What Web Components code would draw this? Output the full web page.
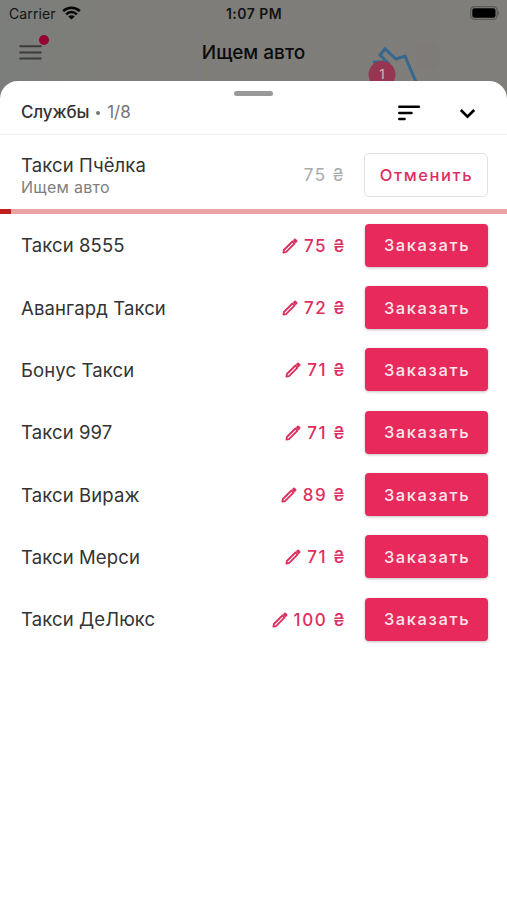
<!DOCTYPE html>
<html lang="ru">
<head>
<meta charset="UTF-8">
<meta name="viewport" content="width=device-width, initial-scale=1.0">
<title>Ищем авто</title>
<style>
    body {
        margin: 0;
        font-family: Inter, "Liberation Sans", sans-serif;
    }
</style>
</head>
<body>
<taxi-app></taxi-app>

<script>
/* status-bar: carrier, time and battery */
const statusBarTemplate = document.createElement("template");

statusBarTemplate.innerHTML = `
    <style>
    :host {
        display: grid;
        grid-template-columns: 1fr auto 1fr;
        align-items: center;
        height: 27px;
        padding: 0 8px 0 9px;
        font-size: 14px;
        color: #131312;
    }

    .carrier {
        display: flex;
        align-items: center;
        gap: 6px;
        letter-spacing: 0.1px;
    }

    .time {
        font-size: 14px;
        font-weight: 600;
        letter-spacing: 0.45px;
    }

    .battery {
        justify-self: end;
    }

    svg {
        display: block;
        margin-top: -1px;
    }
    </style>

    <div class="carrier">
        <span>Carrier</span>
        <svg width="19" height="14" viewBox="0 0 19 14" fill="none" stroke="#050505" stroke-width="2.5">
            <path d="M1.2 5.2a11.8 11.8 0 0 1 16.6 0"/>
            <path d="M4.2 8.3a7.5 7.5 0 0 1 10.6 0"/>
            <path d="M9.5 13.6 6.3 10.5a4.6 4.6 0 0 1 6.4 0z" fill="#050505" stroke="none"/>
        </svg>
    </div>
    <span class="time">1:07 PM</span>
    <svg class="battery" width="29" height="14" viewBox="0 0 29 14">
        <rect x="0.7" y="0.7" width="26.4" height="12.6" rx="3.6" fill="none" stroke="#5b5a58" stroke-width="1.3"/>
        <rect x="2.3" y="2.3" width="23.2" height="9.4" rx="2.2" fill="#000"/>
        <path d="M28 4.8c1.5.6 1.5 3.8 0 4.4z" fill="#5b5a58"/>
    </svg>
`;

class StatusBar extends HTMLElement {
    constructor() {
        super();
        this.attachShadow({ mode: "open" });
    }

    connectedCallback() {
        this.shadowRoot.appendChild(statusBarTemplate.content.cloneNode(true));
    }
}

window.customElements.define("status-bar", StatusBar);

/* nav-header: menu button with its dot, the title goes in the slot */
const navHeaderTemplate = document.createElement("template");

navHeaderTemplate.innerHTML = `
    <style>
    :host {
        display: grid;
        grid-template-columns: 1fr auto 1fr;
        align-items: center;
        height: 51px;
        padding: 0 19px;
        font-size: 19px;
        font-weight: 500;
        color: #0b0b0b;
    }

    .menu {
        position: relative;
        width: 24px;
        height: 24px;
    }

    .dot {
        position: absolute;
        top: -6px;
        left: 20px;
        width: 10px;
        height: 10px;
        border-radius: 50%;
        background: #970033;
    }
    </style>

    <div class="menu">
        <svg width="24" height="24" viewBox="0 0 24 24" stroke="#3c3b3a" stroke-width="2">
            <path d="M0.5 5.3h22M0.5 11.4h22M0.5 17.5h22"/>
        </svg>
        <span class="dot"></span>
    </div>
    <slot></slot>
`;

class NavHeader extends HTMLElement {
    constructor() {
        super();
        this.attachShadow({ mode: "open" });
    }

    connectedCallback() {
        this.shadowRoot.appendChild(navHeaderTemplate.content.cloneNode(true));
    }
}

window.customElements.define("nav-header", NavHeader);

/* route-map: dimmed map with the route and the pickup pin */
const routeMapTemplate = document.createElement("template");

routeMapTemplate.innerHTML = `
    <style>
    :host {
        display: block;
        background: linear-gradient(90deg, #7b7e7b, #7f7d79 25%, #807e7a);
    }

    svg {
        display: block;
    }

    text {
        font-size: 13px;
        font-weight: 500;
    }
    </style>

    <svg width="507" height="120" viewBox="0 0 507 120">
        <path d="M205 27v54M262 27v54" stroke="#85826f" stroke-width="3" opacity=".35"/>
        <rect x="416" y="43" width="24" height="26" rx="8" fill="#7a7876" opacity=".4"/>
        <path d="M373 62h14l-7-7 5-6 11 10 9-3 11 26" fill="none" stroke="#35688f" stroke-width="3"/>
        <circle cx="382" cy="74.5" r="13.5" fill="#963652"/>
        <text x="382" y="79" text-anchor="middle" fill="#c4b1b5">1</text>
    </svg>
`;

class RouteMap extends HTMLElement {
    constructor() {
        super();
        this.attachShadow({ mode: "open" });
    }

    connectedCallback() {
        this.shadowRoot.appendChild(routeMapTemplate.content.cloneNode(true));
    }
}

window.customElements.define("route-map", RouteMap);

/* sheet-header

attributes:
    - label
    - count
*/
const sheetHeaderTemplate = document.createElement("template");

sheetHeaderTemplate.innerHTML = `
    <style>
    :host {
        display: block;
        box-sizing: border-box;
        height: 54px;
        padding-top: 10px;
        border-bottom: 1px solid #f2f2f2;
    }

    .handle {
        width: 39px;
        height: 5px;
        margin: 0 auto;
        border-radius: 3px;
        background: #999;
    }

    .bar {
        display: flex;
        align-items: center;
        height: 28px;
        padding: 2px 28px 0 21px;
        font-size: 17px;
        color: #757575;
    }

    .label {
        font-weight: 500;
        letter-spacing: -0.15px;
        color: #333;
    }

    .separator {
        width: 4px;
        height: 4px;
        margin: 2px 7px 0 7px;
        border-radius: 50%;
        background: #757575;
    }

    .count {
        flex-grow: 1;
    }

    .bar svg {
        margin-top: 2px;
        margin-left: 34px;
    }
    </style>

    <div class="handle"></div>
    <div class="bar">
        <span class="label"></span>
        <span class="separator"></span>
        <span class="count"></span>
        <svg width="24" height="18" viewBox="0 0 24 18" stroke="#000" stroke-width="2.5" stroke-linecap="round">
            <path d="M2.3 2.7h19.6M2.3 8.9h12.2M2.3 15.1h5.2"/>
        </svg>
        <svg width="24" height="18" viewBox="0 0 24 18" fill="none" stroke="#000" stroke-width="2.7">
            <path d="M5.8 6 12.5 12.7 19.2 6"/>
        </svg>
    </div>
`;

class SheetHeader extends HTMLElement {
    constructor() {
        super();
        this.attachShadow({ mode: "open" });
    }

    connectedCallback() {
        this.shadowRoot.appendChild(sheetHeaderTemplate.content.cloneNode(true));
        this.shadowRoot.querySelector(".label").textContent = this.getAttribute("label");
        this.shadowRoot.querySelector(".count").textContent = this.getAttribute("count");
    }
}

window.customElements.define("sheet-header", SheetHeader);

/* taxi-row

attributes:
    - name
    - price
    - status: text under the name, set while the service is searching

events:
    - order
    - cancelOrder
*/
const taxiRowTemplate = document.createElement("template");

taxiRowTemplate.innerHTML = `
    <style>
    :host {
        display: flex;
        align-items: center;
        box-sizing: border-box;
        height: 62.35px;
        padding: 0 19px 0 21px;
        color: #333;
    }

    :host([status]) {
        height: 74px;
        padding-top: 6px;
    }

    .info {
        flex-grow: 1;
        font-size: 18.5px;
        line-height: 24px;
        letter-spacing: 0.12px;
    }

    .status {
        font-size: 16px;
        line-height: 20px;
        letter-spacing: 0.3px;
        color: #808080;
    }

    .price {
        display: flex;
        align-items: center;
        gap: 6px;
        margin-right: 19px;
        padding-top: 1px;
        font-size: 17px;
        font-weight: 500;
        letter-spacing: 1.5px;
        color: #dc2f5f;
    }

    :host([status]) .price {
        padding-top: 0;
        font-weight: 400;
        color: #aaa;
    }

    button {
        box-sizing: border-box;
        width: 123px;
        height: 43px;
        padding: 0 0 0 1px;
        border: none;
        border-radius: 4px;
        background: #e7295c;
        box-shadow: 0 1px 3px rgba(0, 0, 0, 0.25);
        font-family: inherit;
        font-size: 16.5px;
        font-weight: 500;
        letter-spacing: 1.6px;
        color: #fde6ec;
    }

    :host([status]) button {
        width: 124px;
        height: 44px;
        border: 1px solid #e2e2e2;
        border-radius: 5px;
        background: #fff;
        box-shadow: none;
        color: #dc2f5f;
    }

    :host([status]) .pencil,
    :host(:not([status])) .status {
        display: none;
    }
    </style>

    <div class="info">
        <div class="name"></div>
        <div class="status"></div>
    </div>
    <div class="price">
        <svg class="pencil" width="16" height="16" viewBox="0 0 16 16" fill="none" stroke="#dc2f5f" stroke-width="1.8" stroke-linejoin="round">
            <path d="M1.4 14.6 1.9 12 10.4 3.5 12.5 5.6 4 14.1z"/>
            <path d="M12 2.4 13 1.4 14.6 3 13.6 4z" fill="#dc2f5f"/>
        </svg>
        <span class="amount"></span>
    </div>
    <button></button>
`;

class TaxiRow extends HTMLElement {
    constructor() {
        super();
        this.attachShadow({ mode: "open" });
    }

    connectedCallback() {
        this.shadowRoot.appendChild(taxiRowTemplate.content.cloneNode(true));

        const searching = this.hasAttribute("status");
        const button = this.shadowRoot.querySelector("button");

        this.shadowRoot.querySelector(".name").textContent = this.getAttribute("name");
        this.shadowRoot.querySelector(".status").textContent = this.getAttribute("status");
        this.shadowRoot.querySelector(".amount").textContent = this.getAttribute("price") + " ₴";
        button.textContent = searching ? "Отменить" : "Заказать";

        button.addEventListener("click", () => {
            this.dispatchEvent(new CustomEvent(searching ? "cancelOrder" : "order", {
                detail: this.getAttribute("name")
            }));
        });
    }
}

window.customElements.define("taxi-row", TaxiRow);

/* search-progress: thin bar, value is the filled width in percent */
class SearchProgress extends HTMLElement {
    constructor() {
        super();
        this.attachShadow({ mode: "open" });
    }

    connectedCallback() {
        this.shadowRoot.innerHTML = `
            <style>
            :host {
                display: block;
                height: 5px;
                background: #eba3a6;
            }

            div {
                height: 100%;
                background: #c2201f;
            }
            </style>
            <div></div>
        `;
        this.shadowRoot.querySelector("div").style.width = this.getAttribute("value") + "%";
    }
}

window.customElements.define("search-progress", SearchProgress);

/* taxi-app: the map screen with the sheet of services over it */
const taxiAppTemplate = document.createElement("template");

taxiAppTemplate.innerHTML = `
    <style>
    :host {
        display: flex;
        flex-direction: column;
        position: relative;
        height: 900px;
        overflow: hidden;
    }

    route-map {
        position: absolute;
        top: 0;
        left: 0;
        right: 0;
        height: 120px;
    }

    header {
        position: relative;
        height: 81px;
    }

    .sheet {
        position: relative;
        flex-grow: 1;
        border-radius: 18px 18px 0 0;
        background: #fff;
    }
    </style>

    <route-map></route-map>
    <header>
        <status-bar></status-bar>
        <nav-header>Ищем авто</nav-header>
    </header>
    <div class="sheet">
        <sheet-header label="Службы" count="1/8"></sheet-header>
        <taxi-row name="Такси Пчёлка" price="75" status="Ищем авто"></taxi-row>
        <search-progress value="2.1"></search-progress>
        <taxi-row name="Такси 8555" price="75"></taxi-row>
        <taxi-row name="Авангард Такси" price="72"></taxi-row>
        <taxi-row name="Бонус Такси" price="71"></taxi-row>
        <taxi-row name="Такси 997" price="71"></taxi-row>
        <taxi-row name="Такси Вираж" price="89"></taxi-row>
        <taxi-row name="Такси Мерси" price="71"></taxi-row>
        <taxi-row name="Такси ДеЛюкс" price="100"></taxi-row>
    </div>
`;

class TaxiApp extends HTMLElement {
    constructor() {
        super();
        this.attachShadow({ mode: "open" });
    }

    connectedCallback() {
        this.shadowRoot.appendChild(taxiAppTemplate.content.cloneNode(true));
    }
}

window.customElements.define("taxi-app", TaxiApp);
</script>
</body>
</html>
